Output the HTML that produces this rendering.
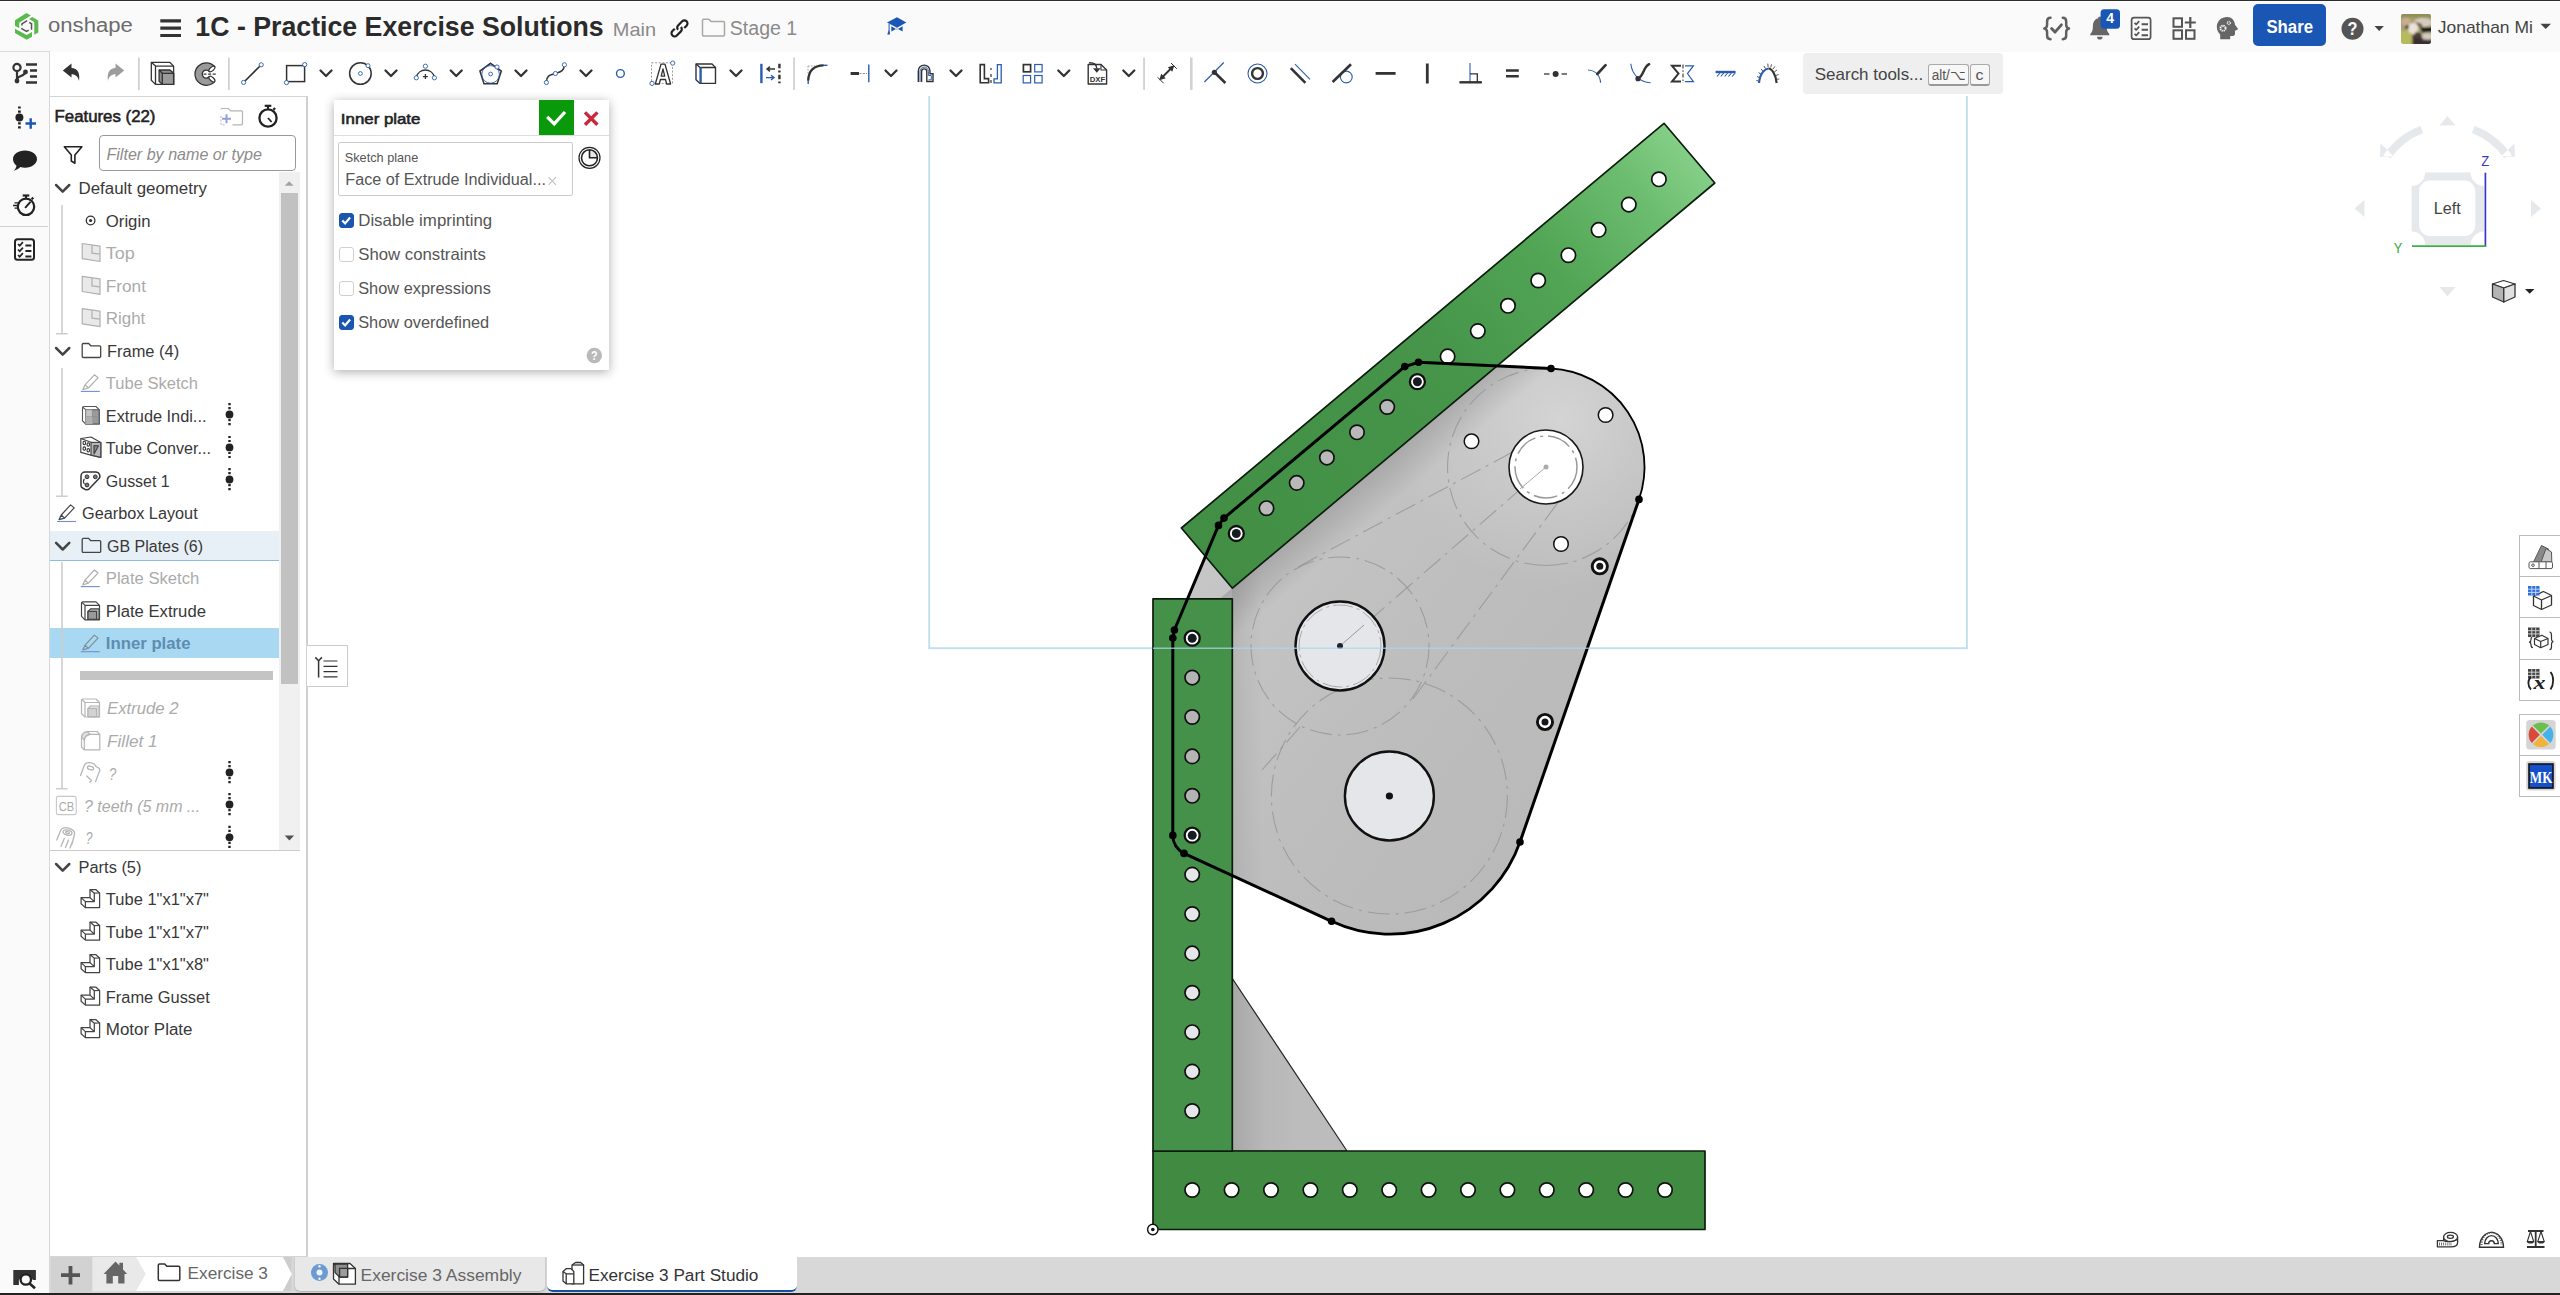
<!DOCTYPE html>
<html lang="en"><head><meta charset="utf-8"><title>1C - Practice Exercise Solutions | Exercise 3 Part Studio</title>
<style>
html,body{margin:0;padding:0;}
body{width:2560px;height:1295px;overflow:hidden;background:#fff;position:relative;font-family:"Liberation Sans",sans-serif;}
.abs{position:absolute;left:0;top:0;}
div{box-sizing:border-box;position:absolute;}
#topline{left:0;top:0;width:2560px;height:2px;background:#fff;border-top:1px solid #2d2d2d;}
#header{left:0;top:1px;width:2560px;height:51px;background:#fafafa;}
#toolbar{left:49px;top:52px;width:2511px;height:45px;background:#fff;}
#tbline{left:49px;top:96px;width:259px;height:1px;background:#d4d4d4;}
#rail{left:0;top:52px;width:49px;height:1241px;background:#fafafa;}
#railtab{left:0;top:51px;width:50px;height:46px;background:#fafafa;border-top:1px solid #dadada;border-right:1px solid #dadada;}
#railsep{left:0;top:226px;width:48px;height:1px;background:#d0d0d0;}
#features{left:49px;top:96px;width:259px;height:1161px;background:#fff;border:1px solid #d6d6d6;border-right:2px solid #d0d0d0;}
#search{left:1803px;top:53px;width:199.5px;height:41px;background:#efefef;border-radius:4px;}
.key{top:64px;height:22px;background:#f7f7f7;border:1px solid #aaa;border-bottom:2px solid #999;border-radius:3px;}
#dialog{left:334px;top:100px;width:275px;height:270px;background:#fff;box-shadow:0 2px 10px rgba(0,0,0,.32);}
#dlghead{left:0;top:0;width:275px;height:36px;border-bottom:1px solid #dcdcdc;}
#okbtn{left:205px;top:0;width:35px;height:35px;background:#0a990b;}
#skbox{left:4px;top:42px;width:235px;height:54px;border:1px solid #ccc;border-radius:2px;}
.cb{left:5px;width:15px;height:15px;border-radius:3px;border:1px solid #cfcfcf;background:#fff;}
.cb.on{background:#1a56b0;border-color:#1a56b0;}
#bottombar{left:49px;top:1257px;width:2511px;height:36px;background:#d8d8d8;}
#botline{left:0;top:1293px;width:2560px;height:2px;background:#222;}
#plusbtn{left:51px;top:1257px;width:41px;height:36px;background:#d2d2d2;}
#tabA{left:295px;top:1257px;width:250px;height:34px;background:#e8e8e8;border-radius:0 0 5px 5px;box-shadow:0 1px 2px rgba(0,0,0,.2);}
#tabB{left:547px;top:1256px;width:250px;height:36px;background:#fff;border-bottom:2px solid #1b4f9c;border-radius:0 0 6px 6px;}
#share{left:2253px;top:4px;width:73px;height:42px;background:#1a56b3;border-radius:5px;}
#selrow{left:50px;top:628px;width:229px;height:30px;background:#a9d8f2;}
#gbrow{left:50px;top:531px;width:229px;height:30px;background:#e8f0f7;border-bottom:1px solid #8bbbe6;}
#sbtrack{left:279px;top:172px;width:21px;height:678px;background:#f0f0f0;}
#sbthumb{left:281px;top:193px;width:17px;height:491px;background:#c1c1c1;}
#rollbar{left:80px;top:671px;width:193px;height:9px;background:#c4c4c4;}
#flistbot{left:50px;top:850px;width:250px;height:1px;background:#ccc;}
#filter{left:99px;top:135px;width:197px;height:36px;border:1px solid #999;border-radius:4px;background:#fff;}
#toggle{left:307px;top:645px;width:41px;height:42px;background:#fff;border:1px solid #ccc;border-left:none;}
#rightbar1{left:2519px;top:535px;width:42px;height:166px;background:#fff;border:1px solid #bbb;}
#rightbar2{left:2519px;top:714px;width:42px;height:83px;background:#fff;border:1px solid #bbb;}
.rsep{left:2519px;width:42px;height:1px;background:#bbb;}

</style></head>
<body>
<div id="header"></div><div id="topline"></div>
<div id="toolbar"></div>
<div id="rail"></div><div id="railtab"></div><div id="railsep"></div>
<div id="features"></div><div id="tbline"></div>
<div id="sbtrack"></div><div id="sbthumb"></div>
<div id="gbrow"></div><div id="selrow"></div><div id="rollbar"></div><div id="flistbot"></div>
<div id="filter"></div>
<div id="search"></div><div class="key" style="left:1928px;width:40.5px"></div><div class="key" style="left:1969.5px;width:20.5px"></div>
<div id="share"></div>
<div id="bottombar"></div><div id="plusbtn"></div><div id="tabA"></div><div id="tabB"></div>
<div id="botline"></div>
<svg id="cv" class="abs" width="2560" height="1295" viewBox="0 0 2560 1295">
<defs>
<linearGradient id="gDiag" gradientUnits="userSpaceOnUse" x1="1207" y1="557.7" x2="1689" y2="152.8">
<stop offset="0" stop-color="#428e45"/><stop offset="0.5" stop-color="#46954b"/><stop offset="0.72" stop-color="#52a555"/><stop offset="0.9" stop-color="#6dbd70"/><stop offset="1" stop-color="#84cf87"/></linearGradient>
<linearGradient id="gPlate" gradientUnits="userSpaceOnUse" x1="1250" y1="500" x2="1650" y2="800">
<stop offset="0" stop-color="#c6c6c6"/><stop offset="0.5" stop-color="#bdbdbd"/><stop offset="1" stop-color="#b8b8b8"/></linearGradient>
<radialGradient id="gPlateHi" gradientUnits="userSpaceOnUse" cx="1560" cy="420" r="170">
<stop offset="0" stop-color="#d4d4d4" stop-opacity="1"/><stop offset="1" stop-color="#d0d0d0" stop-opacity="0"/></radialGradient>
<linearGradient id="gGus" gradientUnits="userSpaceOnUse" x1="1232" y1="1000" x2="1300" y2="1000">
<stop offset="0" stop-color="#a8a8a8"/><stop offset="0.5" stop-color="#b8b8b8"/><stop offset="1" stop-color="#bcbcbc"/></linearGradient>
</defs>
<path d="M929.2 96V648.2H1966.9V96" fill="none" stroke="#c0e1ec" stroke-width="1.9"/>
<path d="M1172.8 835.4 L1172.8 638 L1174.4 630 L1218.5 525.4 L1224 518.1 L1404.8 366.6 L1418.5 362.3 L1551 368.5 A98.5 98.5 0 0 1 1639 499.4 L1520 842 A138 138 0 0 1 1331.6 921.3 L1184 853.4 A20 20 0 0 1 1172.8 835.4 Z" fill="url(#gPlate)"/>
<path d="M1172.8 835.4 L1172.8 638 L1174.4 630 L1218.5 525.4 L1224 518.1 L1404.8 366.6 L1418.5 362.3 L1551 368.5 A98.5 98.5 0 0 1 1639 499.4 L1520 842 A138 138 0 0 1 1331.6 921.3 L1184 853.4 A20 20 0 0 1 1172.8 835.4 Z" fill="url(#gPlateHi)"/>
<clipPath id="cpPlate"><path d="M1172.8 835.4 L1172.8 638 L1174.4 630 L1218.5 525.4 L1224 518.1 L1404.8 366.6 L1418.5 362.3 L1551 368.5 A98.5 98.5 0 0 1 1639 499.4 L1520 842 A138 138 0 0 1 1331.6 921.3 L1184 853.4 A20 20 0 0 1 1172.8 835.4 Z"/></clipPath>
<linearGradient id="gSh" gradientUnits="userSpaceOnUse" x1="1473" y1="385" x2="1498" y2="414.5"><stop offset="0" stop-color="#000" stop-opacity="0.14"/><stop offset="1" stop-color="#000" stop-opacity="0"/></linearGradient>
<path d="M1171 639.6 L1714.8 183 L1760 236 L1216.6 692.4 Z" fill="url(#gSh)" clip-path="url(#cpPlate)"/>
<linearGradient id="gSh2" gradientUnits="userSpaceOnUse" x1="1232" y1="700" x2="1262" y2="700"><stop offset="0" stop-color="#000" stop-opacity="0.07"/><stop offset="1" stop-color="#000" stop-opacity="0"/></linearGradient>
<rect x="1232" y="550" width="32" height="380" fill="url(#gSh2)" clip-path="url(#cpPlate)"/>
<path d="M1232 978 L1347 1151 L1232 1151 Z" fill="url(#gGus)" stroke="#222" stroke-width="1.2" stroke-linejoin="round"/>
<circle cx="1340" cy="646" r="89" stroke="#959595" stroke-width="1.1" fill="none" stroke-dasharray="22 6 3 6" opacity="0.8"/>
<circle cx="1389.4" cy="796" r="118" stroke="#959595" stroke-width="1.1" fill="none" stroke-dasharray="22 6 3 6" opacity="0.8"/>
<path d="M1546 565.5 A98.5 98.5 0 0 1 1546 368.5" stroke="#959595" stroke-width="1.1" fill="none" stroke-dasharray="22 6 3 6" opacity="0.8"/>
<path d="M1546 565.5 A98.5 98.5 0 0 0 1632 515" stroke="#959595" stroke-width="1.1" fill="none" stroke-dasharray="22 6 3 6" opacity="0.8"/>
<path d="M1298 567 L1535 440 M1413 699 L1562 497 M1340 646 L1546 467" stroke="#959595" stroke-width="1.1" fill="none" stroke-dasharray="22 6 3 6" opacity="0.8"/>
<path d="M1262 770 L1300 727" stroke="#959595" stroke-width="1.1" fill="none" stroke-dasharray="22 6 3 6" opacity="0.8"/>
<circle cx="1546" cy="467" r="37" fill="#fff" stroke="#1a1a1a" stroke-width="1.6"/>
<circle cx="1546" cy="467" r="31" fill="none" stroke="#999" stroke-width="1.5" stroke-dasharray="24 5 3 5"/>
<circle cx="1546" cy="467" r="2.5" fill="#aaa"/><path d="M1546 467 L1520 489" stroke="#aaa" stroke-width="1"/>
<circle cx="1340" cy="646" r="44.5" fill="#e4e6e9" stroke="#111" stroke-width="2.4"/>
<circle cx="1340" cy="646" r="41" fill="none" stroke="#aaa" stroke-width="1" stroke-dasharray="20 4 3 4"/>
<path d="M1340 646 L1364 625" stroke="#999" stroke-width="1"/><circle cx="1340" cy="646" r="3" fill="#1a2228"/>
<circle cx="1389.4" cy="796" r="44.5" fill="#e4e6e9" stroke="#111" stroke-width="2.4"/><circle cx="1389.4" cy="796" r="3.6" fill="#111"/>
<circle cx="1605.6" cy="415" r="7.3" fill="#fff" stroke="#111" stroke-width="1.5"/>
<circle cx="1471.5" cy="441.3" r="7.3" fill="#fff" stroke="#111" stroke-width="1.5"/>
<circle cx="1561" cy="544" r="7.3" fill="#fff" stroke="#111" stroke-width="1.5"/>
<rect x="1153" y="1151" width="552" height="78.5" fill="#408b41" stroke="#0e1c0e" stroke-width="1.7" stroke-linejoin="round"/>
<rect x="1153" y="598.8" width="79.3" height="552.4" fill="#45914a" stroke="#0e1c0e" stroke-width="1.7" stroke-linejoin="round"/>
<path d="M1181.4 528 L1664 123.3 L1714.8 183 L1232.4 588.2 Z" fill="url(#gDiag)" stroke="#0e1c0e" stroke-width="1.7" stroke-linejoin="round"/>
<circle cx="1192.2" cy="1190" r="7.2" fill="#fff" stroke="#111" stroke-width="1.7"/>
<circle cx="1231.6" cy="1190" r="7.2" fill="#fff" stroke="#111" stroke-width="1.7"/>
<circle cx="1271.0" cy="1190" r="7.2" fill="#fff" stroke="#111" stroke-width="1.7"/>
<circle cx="1310.4" cy="1190" r="7.2" fill="#fff" stroke="#111" stroke-width="1.7"/>
<circle cx="1349.8" cy="1190" r="7.2" fill="#fff" stroke="#111" stroke-width="1.7"/>
<circle cx="1389.2" cy="1190" r="7.2" fill="#fff" stroke="#111" stroke-width="1.7"/>
<circle cx="1428.6" cy="1190" r="7.2" fill="#fff" stroke="#111" stroke-width="1.7"/>
<circle cx="1468.0" cy="1190" r="7.2" fill="#fff" stroke="#111" stroke-width="1.7"/>
<circle cx="1507.4" cy="1190" r="7.2" fill="#fff" stroke="#111" stroke-width="1.7"/>
<circle cx="1546.8" cy="1190" r="7.2" fill="#fff" stroke="#111" stroke-width="1.7"/>
<circle cx="1586.2" cy="1190" r="7.2" fill="#fff" stroke="#111" stroke-width="1.7"/>
<circle cx="1625.6" cy="1190" r="7.2" fill="#fff" stroke="#111" stroke-width="1.7"/>
<circle cx="1665.0" cy="1190" r="7.2" fill="#fff" stroke="#111" stroke-width="1.7"/>
<circle cx="1192.2" cy="638.2" r="7.5" fill="#fff" stroke="#111" stroke-width="2.3"/><circle cx="1192.2" cy="638.2" r="4.5" fill="#151b20"/>
<circle cx="1192.2" cy="677.6" r="7.2" fill="#b4b4b4" stroke="#111" stroke-width="1.7"/>
<circle cx="1192.2" cy="717.0" r="7.2" fill="#b4b4b4" stroke="#111" stroke-width="1.7"/>
<circle cx="1192.2" cy="756.4" r="7.2" fill="#b4b4b4" stroke="#111" stroke-width="1.7"/>
<circle cx="1192.2" cy="795.8" r="7.2" fill="#b4b4b4" stroke="#111" stroke-width="1.7"/>
<circle cx="1192.2" cy="835.2" r="7.5" fill="#fff" stroke="#111" stroke-width="2.3"/><circle cx="1192.2" cy="835.2" r="4.5" fill="#151b20"/>
<circle cx="1192.2" cy="874.6" r="7.2" fill="#e4e6ea" stroke="#111" stroke-width="1.7"/>
<circle cx="1192.2" cy="914.0" r="7.2" fill="#e4e6ea" stroke="#111" stroke-width="1.7"/>
<circle cx="1192.2" cy="953.4" r="7.2" fill="#e4e6ea" stroke="#111" stroke-width="1.7"/>
<circle cx="1192.2" cy="992.8" r="7.2" fill="#e4e6ea" stroke="#111" stroke-width="1.7"/>
<circle cx="1192.2" cy="1032.2" r="7.2" fill="#e4e6ea" stroke="#111" stroke-width="1.7"/>
<circle cx="1192.2" cy="1071.6" r="7.2" fill="#e4e6ea" stroke="#111" stroke-width="1.7"/>
<circle cx="1192.2" cy="1111.0" r="7.2" fill="#e4e6ea" stroke="#111" stroke-width="1.7"/>
<circle cx="1236.3" cy="533.5" r="7.5" fill="#fff" stroke="#111" stroke-width="2.3"/><circle cx="1236.3" cy="533.5" r="4.5" fill="#151b20"/>
<circle cx="1266.5" cy="508.2" r="7.2" fill="#b9b9b9" stroke="#111" stroke-width="1.7"/>
<circle cx="1296.7" cy="482.9" r="7.2" fill="#b9b9b9" stroke="#111" stroke-width="1.7"/>
<circle cx="1326.9" cy="457.6" r="7.2" fill="#b9b9b9" stroke="#111" stroke-width="1.7"/>
<circle cx="1357.0" cy="432.3" r="7.2" fill="#b9b9b9" stroke="#111" stroke-width="1.7"/>
<circle cx="1387.2" cy="407.0" r="7.2" fill="#b9b9b9" stroke="#111" stroke-width="1.7"/>
<circle cx="1417.4" cy="381.7" r="7.5" fill="#fff" stroke="#111" stroke-width="2.3"/><circle cx="1417.4" cy="381.7" r="4.5" fill="#151b20"/>
<circle cx="1447.6" cy="356.4" r="7.2" fill="#fff" stroke="#111" stroke-width="1.7"/>
<circle cx="1477.8" cy="331.1" r="7.2" fill="#fff" stroke="#111" stroke-width="1.7"/>
<circle cx="1508.0" cy="305.8" r="7.2" fill="#fff" stroke="#111" stroke-width="1.7"/>
<circle cx="1538.2" cy="280.5" r="7.2" fill="#fff" stroke="#111" stroke-width="1.7"/>
<circle cx="1568.4" cy="255.2" r="7.2" fill="#fff" stroke="#111" stroke-width="1.7"/>
<circle cx="1598.6" cy="229.9" r="7.2" fill="#fff" stroke="#111" stroke-width="1.7"/>
<circle cx="1628.8" cy="204.6" r="7.2" fill="#fff" stroke="#111" stroke-width="1.7"/>
<circle cx="1658.9" cy="179.3" r="7.2" fill="#fff" stroke="#111" stroke-width="1.7"/>
<circle cx="1599.8" cy="566.3" r="7.6" fill="#fff" stroke="#111" stroke-width="2.9"/><circle cx="1599.8" cy="566.3" r="3.5" fill="#15181c"/>
<circle cx="1545.0" cy="722.0" r="7.6" fill="#fff" stroke="#111" stroke-width="2.9"/><circle cx="1545.0" cy="722.0" r="3.5" fill="#15181c"/>
<path d="M1331.6 921.3 L1184 853.4 A20 20 0 0 1 1172.8 835.4 L1172.8 638 L1174.4 630 L1218.5 525.4 L1224 518.1 L1404.8 366.6 L1418.5 362.3 L1551 368.5" fill="none" stroke="#000" stroke-width="3" stroke-linejoin="round"/>
<path d="M1551 368.5 A98.5 98.5 0 0 1 1639 499.4" fill="none" stroke="#000" stroke-width="1.8"/>
<path d="M1639 499.4 L1520 842" fill="none" stroke="#000" stroke-width="3"/>
<path d="M1520 842 A138 138 0 0 1 1331.6 921.3" fill="none" stroke="#000" stroke-width="2.8"/>
<circle cx="1172.8" cy="638" r="3.8" fill="#000"/>
<circle cx="1174.4" cy="630" r="3.8" fill="#000"/>
<circle cx="1218.5" cy="525.4" r="3.8" fill="#000"/>
<circle cx="1224" cy="518.1" r="3.8" fill="#000"/>
<circle cx="1404.8" cy="366.6" r="3.8" fill="#000"/>
<circle cx="1418.5" cy="362.3" r="3.8" fill="#000"/>
<circle cx="1551" cy="368.5" r="3.8" fill="#000"/>
<circle cx="1639" cy="499.4" r="3.8" fill="#000"/>
<circle cx="1520" cy="842" r="3.8" fill="#000"/>
<circle cx="1331.6" cy="921.3" r="3.8" fill="#000"/>
<circle cx="1184" cy="853.4" r="3.8" fill="#000"/>
<circle cx="1172.8" cy="835.4" r="3.8" fill="#000"/>
<path d="M1153 648.2H1589" stroke="#a9d6ee" stroke-width="1.6" opacity="0.75"/>
<circle cx="1152.8" cy="1229.5" r="5.2" fill="#fff" stroke="#111" stroke-width="1.4"/><circle cx="1152.8" cy="1229.5" r="1.8" fill="#111"/>
</svg>
<div id="toggle"></div>
<div id="rightbar1"></div><div id="rightbar2"></div>
<div class="rsep" style="top:576px"></div><div class="rsep" style="top:617px"></div><div class="rsep" style="top:659px"></div><div class="rsep" style="top:755px"></div>
<div id="dialog"><div id="dlghead"></div><div id="okbtn"></div><div id="skbox"></div><div class="cb on" style="top:113px"></div><div class="cb" style="top:147px"></div><div class="cb" style="top:181px"></div><div class="cb on" style="top:215px"></div></div>
<svg id="ov" class="abs" width="2560" height="1295" viewBox="0 0 2560 1295" font-family='"Liberation Sans", sans-serif'>
<g stroke="#333" fill="none" stroke-width="2.2"><circle cx="17" cy="67.5" r="3.6" fill="#fafafa"/><path d="M17 71v9.5M17 80c0-5 7-3 8-7.5"/><path d="M26 64.5h11M30 70.5h7M30 76.5h7M26 82.5h11" stroke-width="2.3"/></g><circle cx="17" cy="81" r="2.4" fill="#333"/><circle cx="25.5" cy="72" r="2.4" fill="#333"/>
<path d="M62.8 70.5 L71.5 63.6 V68 C77.5 68 80.2 73 79 81 C78 76.5 75.5 74.3 71.5 74.3 V77.6 Z" fill="#333"/>
<path d="M124.2 70.5 L115.5 63.6 V68 C109.5 68 106.8 73 108 81 C109 76.5 111.5 74.3 115.5 74.3 V77.6 Z" fill="#9c9c9c"/>
<rect x="138.0" y="57.5" width="1.7" height="32.5" fill="#cfcfcf"/>
<rect x="228.0" y="57.5" width="1.7" height="32.5" fill="#cfcfcf"/>
<rect x="793.2" y="57.5" width="1.7" height="32.5" fill="#cfcfcf"/>
<rect x="1143.2" y="57.5" width="1.7" height="32.5" fill="#cfcfcf"/>
<rect x="1190" y="57.5" width="2.6" height="32.5" fill="#d2d2d2"/>
<g stroke="#333" stroke-width="1.3" stroke-linejoin="round"><path d="M151.3 62.3 H169.7 L173.6 66.1 V84.4 H155.5 L151.3 80.3 Z" fill="#fff"/><path d="M151.3 62.3 L155.5 66.1 H173.6 M155.5 66.1 V84.4" fill="none"/><path d="M159.1 70 H170 L173.6 73.3 V84.4 H162.3 L159.1 81.2 Z" fill="#8d8d8d"/><path d="M162.3 73.3 H173.6 V84.4 H162.3 Z" fill="#9b9b9b"/><path d="M159.1 70 L162.3 73.3" fill="none"/></g>
<path d="M214.6 66.5 A11.25 11.25 0 1 0 214.6 81.6 L209.2 76.7 A4 4 0 1 1 209.2 71.4 Z" fill="#9a9a9a" stroke="#333" stroke-width="1.3" stroke-linejoin="round"/><ellipse cx="211.9" cy="69" rx="3.7" ry="1.8" transform="rotate(-42 211.9 69)" fill="#fff" stroke="#333" stroke-width="1.2"/><ellipse cx="211.9" cy="79.1" rx="3.7" ry="1.8" transform="rotate(42 211.9 79.1)" fill="#fff" stroke="#333" stroke-width="1.2"/><path d="M203.5 74.1H217" stroke="#333" stroke-width="1.4" stroke-dasharray="3 1.6"/>
<path d="M244.5 81.5L260.3 65.7" stroke="#333" stroke-width="1.6"/><circle cx="243.6" cy="82.4" r="2.1" fill="#fff" stroke="#2a5db0" stroke-width="0.9"/><circle cx="261.2" cy="64.8" r="2.1" fill="#fff" stroke="#2a5db0" stroke-width="0.9"/>
<rect x="286.6" y="65.6" width="18" height="16" fill="none" stroke="#333" stroke-width="1.5"/><circle cx="304.7" cy="64.6" r="2.1" fill="#fff" stroke="#2a5db0" stroke-width="0.9"/><circle cx="286.5" cy="82.6" r="2.1" fill="#fff" stroke="#2a5db0" stroke-width="0.9"/><path d="M320.5 70.55 L326 76.05 L331.5 70.55" fill="none" stroke="#333" stroke-width="2.3" stroke-linecap="round" stroke-linejoin="round"/>
<circle cx="360.4" cy="73.5" r="10.8" fill="none" stroke="#333" stroke-width="1.5"/><circle cx="360.4" cy="73.5" r="1.9" fill="#fff" stroke="#2a5db0" stroke-width="0.9"/><circle cx="368" cy="65.7" r="2" fill="#fff" stroke="#2a5db0" stroke-width="0.9"/><path d="M385.5 70.55 L391 76.05 L396.5 70.55" fill="none" stroke="#333" stroke-width="2.3" stroke-linecap="round" stroke-linejoin="round"/>
<path d="M416.4 77 A9.3 9.3 0 0 1 434.4 77" fill="none" stroke="#333" stroke-width="1.5"/><circle cx="416.3" cy="77.8" r="2.1" fill="#fff" stroke="#2a5db0" stroke-width="0.9"/><circle cx="434.4" cy="77.8" r="2.1" fill="#fff" stroke="#2a5db0" stroke-width="0.9"/><circle cx="425.4" cy="66.2" r="2.1" fill="#fff" stroke="#2a5db0" stroke-width="0.9"/><path d="M422.9 76.6h5M425.4 74.1v5" stroke="#333" stroke-width="1.3"/><path d="M450.7 70.55 L456.2 76.05 L461.7 70.55" fill="none" stroke="#333" stroke-width="2.3" stroke-linecap="round" stroke-linejoin="round"/>
<polygon points="490.6,63.3 501.3,71.1 497.2,83.7 484.0,83.7 479.9,71.1" fill="none" stroke="#333" stroke-width="1.5"/><circle cx="490.6" cy="74.4" r="8.8" fill="none" stroke="#2a5db0" stroke-width="0.9"/><circle cx="490.6" cy="74" r="1.9" fill="#fff" stroke="#2a5db0" stroke-width="0.9"/><circle cx="497" cy="67" r="2.1" fill="#fff" stroke="#2a5db0" stroke-width="0.9"/><path d="M515.5 70.55 L521 76.05 L526.5 70.55" fill="none" stroke="#333" stroke-width="2.3" stroke-linecap="round" stroke-linejoin="round"/>
<path d="M546.5 82 C546.5 74 552 75 555.4 73.5 C559 72 564 72 564.3 65.2" fill="none" stroke="#333" stroke-width="1.5"/><circle cx="546.4" cy="82.5" r="2.1" fill="#fff" stroke="#2a5db0" stroke-width="0.9"/><circle cx="555.4" cy="73.5" r="2.1" fill="#fff" stroke="#2a5db0" stroke-width="0.9"/><circle cx="564.4" cy="64.8" r="2.1" fill="#fff" stroke="#2a5db0" stroke-width="0.9"/><path d="M580.5 70.55 L586 76.05 L591.5 70.55" fill="none" stroke="#333" stroke-width="2.3" stroke-linecap="round" stroke-linejoin="round"/>
<circle cx="620.4" cy="73.5" r="3.9" fill="none" stroke="#2a5db0" stroke-width="1.4"/>
<rect x="651.5" y="62.8" width="21" height="20.6" fill="none" stroke="#999" stroke-width="1" stroke-dasharray="2 1.6"/><path d="M655.3 84 L661 64.2 H665 L670.6 84 H666.6 L665.5 79.5 H660.4 L659.3 84 Z M661.2 76.2 H664.7 L663 69 Z" fill="#fff" stroke="#333" stroke-width="1.3" stroke-linejoin="round"/><circle cx="672.7" cy="63.1" r="2.1" fill="#fff" stroke="#2a5db0" stroke-width="0.9"/><circle cx="652" cy="83.4" r="2.1" fill="#fff" stroke="#2a5db0" stroke-width="0.9"/>
<g fill="none" stroke="#333" stroke-width="1.4" stroke-linejoin="round"><path d="M696 64 H712 L715.5 67.5 V83.4 H700 L696 79.8 Z"/><path d="M696 64 L700 67.5 H715.5"/></g><path d="M700.6 67.5V83.4" stroke="#2a5db0" stroke-width="2.4"/><path d="M730.5 70.55 L736 76.05 L741.5 70.55" fill="none" stroke="#333" stroke-width="2.3" stroke-linecap="round" stroke-linejoin="round"/>
<path d="M761.4 63.8V83.2" stroke="#2a5db0" stroke-width="2.4"/><path d="M779.4 63.8V83.2" stroke="#333" stroke-width="2.4" stroke-dasharray="4.5 2.2 2 2.2"/><path d="M775 69H767.5M770 66.6L767 69L770 71.4" fill="none" stroke="#333" stroke-width="1.4"/><path d="M766 77.6H773.5M771 75.2L774 77.6L771 80" fill="none" stroke="#2a5db0" stroke-width="1.4"/>
<path d="M808 66H816" stroke="#999" stroke-width="0.9" stroke-dasharray="1.6 1.3"/><path d="M808 66V74" stroke="#999" stroke-width="0.9" stroke-dasharray="1.6 1.3"/><path d="M808.2 84 V80" stroke="#2a5db0" stroke-width="1.4"/><path d="M823 65.3 H827.5" stroke="#2a5db0" stroke-width="1.4"/><path d="M808.2 80.5 C808.6 71 814 65.6 823.5 65.4" fill="none" stroke="#333" stroke-width="2.3"/>
<path d="M850.6 73.5H859" stroke="#333" stroke-width="3"/><path d="M859.5 73.5H867" stroke="#888" stroke-width="1" stroke-dasharray="2 1.3"/><path d="M868.8 64.6V82.2" stroke="#2a5db0" stroke-width="1.4"/><path d="M885.5 70.55 L891 76.05 L896.5 70.55" fill="none" stroke="#333" stroke-width="2.3" stroke-linecap="round" stroke-linejoin="round"/>
<path d="M918.3 82 V71 A5.8 5.8 0 0 1 930 71 V73.8 H933 V81.5 H926.8 V71.5 A2.5 2.5 0 0 0 921.6 71.5 V82" fill="none" stroke="#333" stroke-width="1.4"/><path d="M920 82 V71.3 A4.2 4.2 0 0 1 928.4 71.3 V75.5 H931.3 V79.8 H928.5" fill="none" stroke="#2a5db0" stroke-width="1"/><path d="M950.5 70.55 L956 76.05 L961.5 70.55" fill="none" stroke="#333" stroke-width="2.3" stroke-linecap="round" stroke-linejoin="round"/>
<path d="M980.2 64.6 H984.4 V78.6 H988.6 V82.8 H980.2 Z" fill="none" stroke="#333" stroke-width="1.6"/><path d="M991 68v2M991 74v3M991 80v3" stroke="#333" stroke-width="1.2"/><path d="M1001.2 64.6 H997.4 V78.8 H994 V82.8 H1001.2 Z" fill="none" stroke="#2a5db0" stroke-width="1.3"/>
<rect x="1023.4" y="64.6" width="7.2" height="7.2" fill="none" stroke="#333" stroke-width="1.7"/><rect x="1034.7" y="64.5" width="7.4" height="7.4" fill="none" stroke="#2a5db0" stroke-width="1.2"/><rect x="1023.2" y="75.5" width="7.4" height="7.4" fill="none" stroke="#2a5db0" stroke-width="1.2"/><rect x="1034.7" y="75.5" width="7.4" height="7.4" fill="none" stroke="#2a5db0" stroke-width="1.2"/><path d="M1058.3 70.55 L1063.8 76.05 L1069.3 70.55" fill="none" stroke="#333" stroke-width="2.3" stroke-linecap="round" stroke-linejoin="round"/>
<path d="M1088.2 64.5 H1101 L1106.6 70 V84 H1088.2 Z" fill="#fff" stroke="#333" stroke-width="1.4" stroke-linejoin="round"/><path d="M1101 64.5V70H1106.6" fill="none" stroke="#333" stroke-width="1.1"/><path d="M1089 62.8 C1094 62.5 1096.5 64.5 1096.8 68.5" fill="none" stroke="#333" stroke-width="1.3"/><path d="M1093 68.2 H1100.6 L1096.8 72.8 Z" fill="#333"/><text x="1089.7" y="82.2" font-size="7.6" font-weight="bold" fill="#333" textLength="15.5" lengthAdjust="spacingAndGlyphs">DXF</text><path d="M1123.3 70.55 L1128.8 76.05 L1134.3 70.55" fill="none" stroke="#333" stroke-width="2.3" stroke-linecap="round" stroke-linejoin="round"/>
<path d="M1161 78.5 L1172.5 67" stroke="#333" stroke-width="2"/><path d="M1159.2 80.3 L1161.2 73.8 L1165.7 78.3 Z M1174.3 65.2 L1172.3 71.7 L1167.8 67.2 Z" fill="#333"/><path d="M1157.8 77.4 L1163.6 83.2 M1171 63 L1176.8 68.8" stroke="#333" stroke-width="1"/>
<path d="M1204.4 82L1223.8 62.5" stroke="#2a5db0" stroke-width="1.2"/><path d="M1214.4 72.3L1225.4 83" stroke="#333" stroke-width="2.6"/><circle cx="1214.4" cy="72.3" r="2.6" fill="#333"/>
<circle cx="1257.5" cy="73.5" r="9.5" fill="none" stroke="#2a5db0" stroke-width="1.1"/><circle cx="1257.5" cy="73.5" r="5.4" fill="none" stroke="#333" stroke-width="2.4"/>
<path d="M1290.8 68.2L1305.4 82.8" stroke="#333" stroke-width="2.6"/><path d="M1295 64.2L1310 79.3" stroke="#2a5db0" stroke-width="1.1"/>
<circle cx="1346.3" cy="77" r="5.9" fill="none" stroke="#2a5db0" stroke-width="1.1"/><path d="M1332.6 82L1351 64.2" stroke="#333" stroke-width="2.6"/>
<path d="M1375.6 73.4H1395.6" stroke="#333" stroke-width="2.8"/><path d="M1427.3 63.5V83.5" stroke="#333" stroke-width="2.8"/>
<path d="M1470 63V82" stroke="#2a5db0" stroke-width="1.1"/><path d="M1470 73.8H1477.3V82" fill="none" stroke="#333" stroke-width="1.3"/><path d="M1459.4 82.3H1481.9" stroke="#333" stroke-width="2.4"/>
<path d="M1506 70.6H1518.8M1506 76.3H1518.8" stroke="#333" stroke-width="2.5"/>
<path d="M1544 74H1549.5M1561.5 74H1567" stroke="#456" stroke-width="1.3"/><circle cx="1555.6" cy="74" r="3" fill="#333"/>
<path d="M1588 70 C1595 70.5 1600 75 1600.6 82.8" fill="none" stroke="#2a5db0" stroke-width="1.2"/><path d="M1597.3 74L1605.6 65.2" stroke="#333" stroke-width="2.6" stroke-linecap="round"/>
<path d="M1630.8 63.8 C1632 74 1639 82 1650.6 82.8" fill="none" stroke="#2a5db0" stroke-width="1.1"/><path d="M1638 78.6 C1644 76 1643 67 1649.2 64.2" fill="none" stroke="#333" stroke-width="2.4" stroke-linecap="round"/><circle cx="1638" cy="78.7" r="2.6" fill="#333"/>
<path d="M1681 65.8 H1672 L1678.5 73.6 L1672 81.6 H1681" fill="none" stroke="#333" stroke-width="2"/><path d="M1685 65.8 H1693.4 L1687.5 73.6 L1693.4 81.6 H1685" fill="none" stroke="#2a5db0" stroke-width="1.2"/><path d="M1683 64.5V83" stroke="#333" stroke-width="1.1" stroke-dasharray="4 1.8 1.5 1.8"/>
<path d="M1715.6 72H1735.6" stroke="#2a5db0" stroke-width="2.4"/><path d="M1717 76.5l3-3.5M1720.8 76.5l3-3.5M1724.6 76.5l3-3.5M1728.4 76.5l3-3.5M1732.2 76.5l3-3.5" stroke="#2a5db0" stroke-width="1.1"/>
<path d="M1759 83 C1760 72 1766 68.5 1768.5 68.5" fill="none" stroke="#2a5db0" stroke-width="2.2"/><path d="M1768.5 68.5 C1772 68.5 1776 75 1776.6 83" fill="none" stroke="#333" stroke-width="2.2"/><path d="M1756.3 80.5l2.2.5M1757 76.5l2.4 1M1758.6 72.6l2.4 1.6M1761 69l2 2.2M1764 66l1.4 2.6M1767.8 63.6l.3 3.4M1771.5 64.4l-.8 3M1774.8 66.5l-2 2.6M1777 70l-2.6 1.8M1778.6 74.5l-2.8 1M1779.3 79l-2.8.3" stroke="#555" stroke-width="1"/>
<g fill="#5aba4e"><path d="M14.97 20.27 L26.48 12.97 L30.86 15.57 L19.19 22.86 V28.21 L14.97 25.78 Z"/><path d="M32.16 17.02 L38.32 20.59 V32.43 L34.26 34.86 V21.89 L29.08 18.97 Z"/><path d="M14.97 28.7 L26.64 35.02 L32 31.94 V36.64 L26.64 39.72 L14.97 32.91 Z"/></g><g fill="none" stroke="#555" stroke-width="1.5"><path d="M21.94 25.6 V23.83 L27.13 20.59"/><path d="M29.24 22.54 L31.51 23.67 V29.67"/><path d="M21.29 28.37 L26.48 31.45 L28.75 30.16"/></g>
<path d="M160.3 20.8H181M160.3 28.2H181M160.3 35.5H181" stroke="#333" stroke-width="3.2"/>
<g transform="translate(679.5 28.4) rotate(-45)" fill="none" stroke="#222" stroke-width="2.2" stroke-linecap="butt"><path d="M-3.6 -3.1 H-6.9 A3.1 3.1 0 0 0 -6.9 3.1 H-1.1 A3.1 3.1 0 0 0 2 0"/><path d="M3.600 3.100 H6.900 A3.100 3.100 0 0 0 6.900 -3.100 H1.100 A3.100 3.100 0 0 0 -2 0"/></g>
<path d="M702.5 20.4 a1.2 1.2 0 0 1 1.2 -1.2 H709.0 L711.0 21.5 H723.3 a1.2 1.2 0 0 1 1.2 1.2 V34.8 a1.2 1.2 0 0 1 -1.2 1.2 H703.7 a1.2 1.2 0 0 1 -1.2 -1.2 Z" fill="none" stroke="#a8a8a8" stroke-width="1.5" stroke-linejoin="round"/>
<path d="M887 22.5 L897 17.2 L906.4 22.5 L897 27.8 Z" fill="#1a56b3"/><path d="M891.3 26.2 V31.5 L897 28.6 L902.6 31.5 V26.2 L897 29.6 Z" fill="#1a56b3"/><path d="M888.6 23.4 V30 L887.3 34.4 H890 L889.6 30 V24" fill="#1a56b3"/>
<g fill="none" stroke="#606060" stroke-width="2.5" stroke-linecap="round" stroke-linejoin="round"><path d="M2050.5 17.8 c-3 0 -3.4 1.4 -3.4 3.6 v3.4 c0 2 -1 3.3 -2.8 3.7 c1.8 .4 2.8 1.7 2.8 3.7 v3.4 c0 2.200 .4 3.600 3.400 3.600"/><path d="M2062.800 17.800 c3 0 3.400 1.400 3.400 3.600 v3.400 c0 2 1 3.300 2.800 3.700 c-1.800 .400 -2.800 1.700 -2.800 3.700 v3.400 c0 2.200 -.400 3.600 -3.400 3.600"/><path d="M2051.600 28.500 l3.400 3.600 l6.400 -7.200" stroke-width="2.9"/></g>
<path transform="translate(-1.3 0.3)" d="M2099.4 18 a1.700 1.700 0 0 1 3.400 0 c3.600 1 5.200 4 5.200 8 c0 4 .8 5.800 2.600 7.600 v1.400 h-19 v-1.400 c1.800 -1.800 2.600 -3.600 2.600 -7.600 c0 -4 1.600 -7 5.200 -8 Z M2098.300 36.500 h5.600 a2.800 2.800 0 0 1 -5.600 0 Z" fill="#666"/>
<rect x="2100.6" y="9.2" width="19.400" height="19.600" rx="3.500" fill="#1a56b3"/>
<g fill="none" stroke="#555" stroke-width="1.7" stroke-linejoin="round"><rect x="2131.600" y="17.600" width="19" height="21.600" rx="2.500"/><path d="M2134.600 22.800 l1.600 1.700 l3 -3.400 M2134.600 28.300 l1.600 1.700 l3 -3.400 M2134.600 33.800 l1.600 1.700 l3 -3.400"/><path d="M2141.600 24.300 h6.400 M2141.600 29.800 h6.400 M2141.600 35.300 h6.400" stroke-width="2"/></g>
<g fill="none" stroke="#555" stroke-width="2"><rect x="2173.500" y="18.300" width="8.500" height="8.500"/><rect x="2173.500" y="30.300" width="8.500" height="8.500"/><rect x="2186" y="30.300" width="8.500" height="8.500"/><path d="M2190.300 17 v11 M2184.800 22.500 h11" stroke-width="2.200"/></g>
<path transform="translate(4453.800 0) scale(-1 1)" d="M2226.500 17 c6 0 10.500 4.200 10.500 9.800 c0 3.600 -1.600 5.800 -3.400 7.600 v4.900 h-10 v-3.400 h-2.600 c-1.400 0 -2.200 -.8 -2.200 -2.200 v-3 l-2.400 -1 c-.6 -.3 -.6 -.9 -.2 -1.400 l2.600 -3.600 c.4 -4.400 3.400 -7.700 7.700 -7.700 Z" fill="#666"/><circle cx="2223" cy="28.300" r="2.600" fill="none" stroke="#fafafa" stroke-width="1.900" stroke-dasharray="1.300 .75"/><circle cx="2228.800" cy="23" r="1.500" fill="none" stroke="#fafafa" stroke-width="1.300" stroke-dasharray=".9 .65"/>
<circle cx="2352.500" cy="28.700" r="11" fill="#555"/><text x="2347.6" y="35" font-size="17.5" fill="#fafafa" textLength="10" lengthAdjust="spacingAndGlyphs" font-weight="bold" >?</text>
<path d="M2374.500 26 h9.400 l-4.700 5 Z" fill="#444"/><path d="M2540.400 23.800 h10.600 l-5.300 5.200 Z" fill="#444"/>
<defs><clipPath id="av"><rect x="2401" y="13.900" width="30" height="30" rx="1.800"/></clipPath><filter id="avb" x="-10%" y="-10%" width="120%" height="120%"><feGaussianBlur stdDeviation="0.9"/></filter></defs><g clip-path="url(#av)"><g filter="url(#avb)" transform="translate(2401 13.900)"><rect x="-3" y="-3" width="36" height="36" fill="#a9a170"/><rect x="-3" y="-3" width="36" height="6.500" fill="#8e8e56"/><rect x="-3" y="17" width="13.500" height="16" fill="#b6ba5d"/><ellipse cx="5" cy="8" rx="4.500" ry="4.500" fill="#c9ad90"/><ellipse cx="22" cy="8.500" rx="9" ry="4.500" fill="#d6ccbb"/><ellipse cx="12" cy="14.500" rx="5" ry="5.500" fill="#ece2d9"/><path d="M14 8 l6 1.500 l2 4 l-4 -1 z" fill="#5a4a38"/><ellipse cx="6" cy="13" rx="1.800" ry="2" fill="#2e2a18"/><path d="M19 13.500 L33 13 V17.800 L21 18.500 Z" fill="#191616"/><ellipse cx="26" cy="22.500" rx="6" ry="3.500" fill="#d3cac1"/><path d="M11.500 21 L20 19.500 L22 25.500 L33 26 V33 H11.500 Z" fill="#3a2f2d"/><path d="M14 18 l6 1 l1 5 l-7 0z" fill="#4a3d38"/></g></g>
<path d="M19.400 106.400 v2.200 m0 1.900 v2.200 M19.400 122.200 v2.200 m0 1.900 v2.200" stroke="#222" stroke-width="2.700"/><circle cx="19.400" cy="117.500" r="4" fill="#222"/><path d="M25.500 123.500 h10.500 M30.700 118.300 v10.500" stroke="#1a56b3" stroke-width="2.400"/>
<path d="M25 150.500 c7 0 12 3.800 12 8.600 c0 4.800 -5 8.600 -12 8.600 c-1.600 0 -3.200 -.2 -4.600 -.6 c-1.800 1.700 -4 2.900 -6.600 3.600 c1.600 -1.500 2.500 -3.200 2.700 -5 c-2.200 -1.600 -3.500 -3.900 -3.500 -6.600 c0 -4.800 5 -8.600 12 -8.600 Z" fill="#222"/>
<circle cx="26" cy="206.800" r="8.200" fill="none" stroke="#222" stroke-width="2.200"/><path d="M22.700 195.500 H29.300" stroke="#222" stroke-width="2.200"/><path d="M26 195.700 V198.600" stroke="#222" stroke-width="2"/><path d="M31.600 199.300 l1.700 -1.700" stroke="#222" stroke-width="2.200"/><path d="M25.600 207.300 L30 202.400" stroke="#222" stroke-width="2" stroke-linecap="round"/><path d="M14.500 202.800 H20 M13 205.500 H18.500 M14.600 208.200 H18.200" stroke="#222" stroke-width="1.300"/>
<g fill="none" stroke="#222" stroke-width="2" stroke-linejoin="round"><rect x="15" y="239.200" width="19" height="20.600" rx="2.500"/></g><g fill="none" stroke="#222" stroke-width="1.700"><path d="M18 244 l1.700 1.700 l3.200 -3.600 M18 249.500 l1.700 1.700 l3.200 -3.600 M18 255 l1.700 1.700 l3.200 -3.600"/><path d="M25.400 245.400 h6 M25.400 250.900 h6 M25.400 256.400 h6" stroke-width="2"/></g>
<path d="M13.300 1270 h22.600 v10 h-3 a8 8 0 0 0 -14 0 l0 5 h-5.600 Z" fill="#333"/><circle cx="25.800" cy="1279.500" r="5.200" fill="#fafafa" stroke="#222" stroke-width="2.300"/><path d="M29.600 1283.500 l5.400 4.800" stroke="#222" stroke-width="2.600"/>
<path d="M221 109.500 a1 1 0 0 1 1 -1 h6.500 l2 2.300 h11 a1 1 0 0 1 1 1 v12 a1 1 0 0 1 -1 1 h-9" fill="none" stroke="#b4b4b4" stroke-width="1.200"/><path d="M221 116 v8.800 h4" fill="none" stroke="#b4b4b4" stroke-width="1" stroke-dasharray="2 1.500"/><path d="M222 118.800 h9 M226.500 114.300 v9" stroke="#8ea1dc" stroke-width="2"/>
<circle cx="268" cy="118" r="8.6" fill="none" stroke="#222" stroke-width="2.3"/><path d="M264.7 105.80000000000001H271.3" stroke="#222" stroke-width="2.2"/><path d="M268 106.0V109.4" stroke="#222" stroke-width="2"/><path d="M273.332 109.83l1.8 -1.8" stroke="#222" stroke-width="2.2"/><path d="M268 118L271.6 122" stroke="#222" stroke-width="1.8"/>
<path d="M64.300 146.800 h17.600 l-7 8.200 v8.200 l-3.600 -2.200 v-6 Z" fill="none" stroke="#222" stroke-width="1.600" stroke-linejoin="round"/>
<path d="M284.700 185.800 h9 l-4.500 -4.600 Z" fill="#a3a3a3"/><path d="M284.700 835.600 h9.400 l-4.700 5 Z" fill="#505050"/>
<path d="M62 205 V333.7 M56 333.7 H67.600" fill="none" stroke="#cdcdcd" stroke-width="1.600"/>
<path d="M62 368 V496.3 M56 496.3 H67.600" fill="none" stroke="#cdcdcd" stroke-width="1.600"/>
<path d="M62 562 V788.7 M56 788.7 H67.600" fill="none" stroke="#cdcdcd" stroke-width="1.600"/>
<path d="M56.1 185.0 L62.7 191.6 L69.3 185.0" fill="none" stroke="#444" stroke-width="2.5" stroke-linecap="round" stroke-linejoin="round"/>
<path d="M56.1 348.0 L62.7 354.59999999999997 L69.3 348.0" fill="none" stroke="#444" stroke-width="2.5" stroke-linecap="round" stroke-linejoin="round"/>
<path d="M56.1 542.9 L62.7 549.5 L69.3 542.9" fill="none" stroke="#444" stroke-width="2.5" stroke-linecap="round" stroke-linejoin="round"/>
<path d="M56.1 864.0 L62.7 870.6 L69.3 864.0" fill="none" stroke="#444" stroke-width="2.5" stroke-linecap="round" stroke-linejoin="round"/>
<circle cx="90.600" cy="220.500" r="4.300" fill="none" stroke="#333" stroke-width="1.300"/><circle cx="90.600" cy="220.500" r="1.600" fill="#333"/>
<path d="M82.2 243.5 L100.0 246.1 V261.5 L82.2 258.7 Z" fill="#e9e9e9" stroke="#b0b0b0" stroke-width="1.2" stroke-linejoin="round"/><path d="M92.0 245.1 V253.1 L100.0 254.1" fill="none" stroke="#b0b0b0" stroke-width="1.2"/>
<path d="M82.2 276.3 L100.0 278.90000000000003 V294.3 L82.2 291.5 Z" fill="#e9e9e9" stroke="#b0b0b0" stroke-width="1.2" stroke-linejoin="round"/><path d="M92.0 277.90000000000003 V285.90000000000003 L100.0 286.90000000000003" fill="none" stroke="#b0b0b0" stroke-width="1.2"/>
<path d="M82.2 308.6 L100.0 311.20000000000005 V326.6 L82.2 323.8 Z" fill="#e9e9e9" stroke="#b0b0b0" stroke-width="1.2" stroke-linejoin="round"/><path d="M92.0 310.20000000000005 V318.20000000000005 L100.0 319.20000000000005" fill="none" stroke="#b0b0b0" stroke-width="1.2"/>
<path d="M82.2 344.7 a1.2 1.2 0 0 1 1.2 -1.2 H88.7 L90.7 345.8 H99.5 a1.2 1.2 0 0 1 1.2 1.2 V356.3 a1.2 1.2 0 0 1 -1.2 1.2 H83.4 a1.2 1.2 0 0 1 -1.2 -1.2 Z" fill="none" stroke="#444" stroke-width="1.3" stroke-linejoin="round"/>
<path d="M82.2 539.6 a1.2 1.2 0 0 1 1.2 -1.2 H88.7 L90.7 540.6999999999999 H99.5 a1.2 1.2 0 0 1 1.2 1.2 V551.1999999999999 a1.2 1.2 0 0 1 -1.2 1.2 H83.4 a1.2 1.2 0 0 1 -1.2 -1.2 Z" fill="none" stroke="#444" stroke-width="1.3" stroke-linejoin="round"/>
<path d="M82.8 389.59999999999997 L85.0 384.9 L94.39999999999999 374.79999999999995 L98.0 377.79999999999995 L88.39999999999999 388.0 Z M85.0 384.9 L88.39999999999999 388.0" fill="none" stroke="#b0b0b0" stroke-width="1.2" stroke-linejoin="round"/><path d="M80.8 391.4H99.8" stroke="#6f8fd0" stroke-width="1.1"/>
<path d="M59 519.7 L61.2 515.0 L70.6 504.9 L74.2 507.9 L64.6 518.1 Z M61.2 515.0 L64.6 518.1" fill="none" stroke="#444" stroke-width="1.2" stroke-linejoin="round"/><path d="M57 521.5H76" stroke="#6f8fd0" stroke-width="1.1"/>
<path d="M82.8 584.8000000000001 L85.0 580.1 L94.39999999999999 570.0 L98.0 573.0 L88.39999999999999 583.2 Z M85.0 580.1 L88.39999999999999 583.2" fill="none" stroke="#b0b0b0" stroke-width="1.2" stroke-linejoin="round"/><path d="M80.8 586.6H99.8" stroke="#6f8fd0" stroke-width="1.1"/>
<path d="M82.8 649.9000000000001 L85.0 645.2 L94.39999999999999 635.1 L98.0 638.1 L88.39999999999999 648.3000000000001 Z M85.0 645.2 L88.39999999999999 648.3000000000001" fill="none" stroke="#7d8f9c" stroke-width="1.2" stroke-linejoin="round"/><path d="M80.8 651.7H99.8" stroke="#6f8fd0" stroke-width="1.1"/>
<g stroke="#555" stroke-width="1.100" stroke-linejoin="round"><path d="M82.500 408 a1.500 1.500 0 0 1 1.500 -1.500 H96 L99.200 409.700 V424 H85.700 L82.500 420.800 Z" fill="#fff"/><rect x="85.700" y="409.700" width="13.500" height="14.300" fill="#9a9a9a"/><path d="M85.700 409.700 h6.700 v14.300 h-6.700 Z M85.700 416.800 h13.500" fill="#c4c4c4" stroke="#8a8a8a" stroke-width=".8"/><path d="M85.700 416.800 h6.700 v7.200 h-6.700z" fill="#b0b0b0" stroke="none"/><path d="M82.500 407 L85.700 409.700" fill="none"/></g>
<g stroke="#444" stroke-width="1.200" stroke-linejoin="round"><path d="M80.800 438.500 L91 437 L100.800 442.500 V457.400 L91 455.200 L80.800 452.400 Z" fill="#fff"/><path d="M91 442.300 L100.800 442.500 V457.400 L91 455.200 Z" fill="#b8b8b8"/><path d="M80.800 438.500 L91 442.300 M94 445.500 L98.500 445.800 L94 454 Z" fill="#888"/></g><g fill="#fff" stroke="#333" stroke-width="1.100"><ellipse cx="84.300" cy="443" rx="1.300" ry="1.700"/><ellipse cx="88.300" cy="444.600" rx="1.300" ry="1.700"/><ellipse cx="84.300" cy="448.600" rx="1.300" ry="1.700"/><ellipse cx="88.300" cy="450.300" rx="1.300" ry="1.700"/></g>
<g stroke="#333" stroke-width="1.500" stroke-linejoin="round"><path d="M81 476 a4 4 0 0 1 4 -4 H96 a4 4 0 0 1 3 6.500 L89.500 488.600 a4 4 0 0 1 -4 1 L82.600 488 a2.500 2.500 0 0 1 -1.600 -2.400 Z" fill="#fff"/></g><g fill="#777" stroke="#333" stroke-width="1"><circle cx="87" cy="476.800" r="1.900"/><circle cx="95.300" cy="476.800" r="1.900"/><circle cx="87" cy="485" r="1.900"/></g><path d="M84.500 479 a3.500 3.500 0 0 0 0 5" fill="none" stroke="#333" stroke-width="1.200"/>
<path d="M229.5 403.0V426.0" stroke="#222" stroke-width="2.4" stroke-dasharray="2.2 1.8"/><circle cx="229.5" cy="414.5" r="3.9" fill="#222"/>
<path d="M229.5 435.9V458.9" stroke="#222" stroke-width="2.4" stroke-dasharray="2.2 1.8"/><circle cx="229.5" cy="447.4" r="3.9" fill="#222"/>
<path d="M229.5 468.0V491.0" stroke="#222" stroke-width="2.4" stroke-dasharray="2.2 1.8"/><circle cx="229.5" cy="479.5" r="3.9" fill="#222"/>
<path d="M229.5 761.0V784.0" stroke="#222" stroke-width="2.4" stroke-dasharray="2.2 1.8"/><circle cx="229.5" cy="772.5" r="3.9" fill="#222"/>
<path d="M229.5 793.0V816.0" stroke="#222" stroke-width="2.4" stroke-dasharray="2.2 1.8"/><circle cx="229.5" cy="804.5" r="3.9" fill="#222"/>
<path d="M229.5 825.8V848.8" stroke="#222" stroke-width="2.4" stroke-dasharray="2.2 1.8"/><circle cx="229.5" cy="837.3" r="3.9" fill="#222"/>
<g stroke="#444" stroke-width="1.2" stroke-linejoin="round" fill="#fff"><path d="M81.5 603.3 a1.5 1.5 0 0 1 1.5 -1.5 H96.0 L99.5 605.3 V619.8 H85.0 L81.5 616.3 Z"/><path d="M82.0 602.3 L85.0 605.3 H99.5 M85.0 605.3 V619.8" fill="none"/><path d="M88.0 611.3 L90.5 608.8 H99.1 V619.4 H88.0Z" fill="#bdbdbd"/><rect x="88.0" y="611.3" width="8.6" height="8.1" fill="#999"/></g>
<g stroke="#b5b5b5" stroke-width="1.2" stroke-linejoin="round" fill="#fff"><path d="M81.5 700.5 a1.5 1.5 0 0 1 1.5 -1.5 H96.0 L99.5 702.5 V717 H85.0 L81.5 713.5 Z"/><path d="M82.0 699.5 L85.0 702.5 H99.5 M85.0 702.5 V717" fill="none"/><path d="M88.0 708.5 L90.5 706 H99.1 V716.6 H88.0Z" fill="#e2e2e2"/><rect x="88.0" y="708.5" width="8.6" height="8.1" fill="#d2d2d2"/></g>
<g stroke="#b5b5b5" stroke-width="1.200" fill="#fff" stroke-linejoin="round"><path d="M81.500 738 a6.500 6.500 0 0 1 6.500 -6.500 H97 L99.800 734.300 V749.800 H84.300 L81.500 747 Z"/><path d="M84.300 740.500 a6.200 6.200 0 0 1 6.200 -6.200 H99.800 M84.300 740.500 V749.800" fill="none"/><path d="M81.600 737 a6 6 0 0 1 6 -5.400 l2.600 2.700 a6.200 6.200 0 0 0 -5.900 6.200 Z" fill="#ddd"/></g>
<g fill="none" stroke="#b5b5b5" stroke-width="1.300" stroke-linecap="round"><path d="M80.500 775.500 L84.600 764.800 a6 4 15 0 1 11.200 1.500 a6 3.200 15 0 1 3.600 5 L95.600 781.600"/><ellipse cx="90.500" cy="768" rx="3.200" ry="1.800" transform="rotate(15 90.500 768)"/><path d="M86.800 776 L91.500 780.500 M90 782 l1.500 -1.500"/></g>
<g fill="none" stroke="#b5b5b5" stroke-width="1.300" stroke-linecap="round"><path d="M56.800 840 L60.600 830.500 a7 4.200 15 0 1 14 3.500 L72 844 M61 846.500 L64.300 838.400 M65.500 847.500 L68.500 840 M70 848 L72.400 842"/><ellipse cx="67.500" cy="832.600" rx="4.600" ry="2.500" transform="rotate(15 67.500 832.600)"/><ellipse cx="67.500" cy="832.600" rx="2" ry="1" transform="rotate(15 67.500 832.600)"/></g>
<rect x="56.400" y="796.400" width="19.800" height="18.200" rx="2" fill="#fff" stroke="#c8c8c8" stroke-width="1.100"/>
<g fill="none" stroke="#444" stroke-width="1.25" stroke-linejoin="round"><path d="M81.1 897.6 L90.0 897.6 L90.0 889.5 L95.7 889.5 L99.6 893.0 L99.6 907.6 L85.4 907.6 L81.1 903.8 Z" fill="#fff"/><path d="M81.1 897.6 L85.4 901.6 L85.4 907.6 M85.4 901.6 L94.3 901.6 L94.3 893.2 L99.6 893.0 M90.0 889.5 L94.3 893.2 M90.0 897.6 L94.3 901.6"/></g>
<g fill="none" stroke="#444" stroke-width="1.25" stroke-linejoin="round"><path d="M81.1 930.1 L90.0 930.1 L90.0 922.0 L95.7 922.0 L99.6 925.5 L99.6 940.1 L85.4 940.1 L81.1 936.3 Z" fill="#fff"/><path d="M81.1 930.1 L85.4 934.1 L85.4 940.1 M85.4 934.1 L94.3 934.1 L94.3 925.7 L99.6 925.5 M90.0 922.0 L94.3 925.7 M90.0 930.1 L94.3 934.1"/></g>
<g fill="none" stroke="#444" stroke-width="1.25" stroke-linejoin="round"><path d="M81.1 962.6 L90.0 962.6 L90.0 954.5 L95.7 954.5 L99.6 958.0 L99.6 972.6 L85.4 972.6 L81.1 968.8 Z" fill="#fff"/><path d="M81.1 962.6 L85.4 966.6 L85.4 972.6 M85.4 966.6 L94.3 966.6 L94.3 958.2 L99.6 958.0 M90.0 954.5 L94.3 958.2 M90.0 962.6 L94.3 966.6"/></g>
<g fill="none" stroke="#444" stroke-width="1.25" stroke-linejoin="round"><path d="M81.1 995.1 L90.0 995.1 L90.0 987.0 L95.7 987.0 L99.6 990.5 L99.6 1005.1 L85.4 1005.1 L81.1 1001.3 Z" fill="#fff"/><path d="M81.1 995.1 L85.4 999.1 L85.4 1005.1 M85.4 999.1 L94.3 999.1 L94.3 990.7 L99.6 990.5 M90.0 987.0 L94.3 990.7 M90.0 995.1 L94.3 999.1"/></g>
<g fill="none" stroke="#444" stroke-width="1.25" stroke-linejoin="round"><path d="M81.1 1027.6 L90.0 1027.6 L90.0 1019.5 L95.7 1019.5 L99.6 1023.0 L99.6 1037.6 L85.4 1037.6 L81.1 1033.8 Z" fill="#fff"/><path d="M81.1 1027.6 L85.4 1031.6 L85.4 1037.6 M85.4 1031.6 L94.3 1031.6 L94.3 1023.2 L99.6 1023.0 M90.0 1019.5 L94.3 1023.2 M90.0 1027.6 L94.3 1031.6"/></g>
<path d="M323.500 661 h14 M323.500 666.300 h14 M323.500 671.600 h14 M323.500 676.900 h14" stroke="#333" stroke-width="1.200"/><path d="M318.600 661 V677.500" stroke="#333" stroke-width="1.500"/><path d="M315.300 657.400 l3.300 3.300 l3.300 -3.300" fill="none" stroke="#333" stroke-width="1.500"/>
<path d="M547.200 116.800 l7 7 l10.800 -11.800" fill="none" stroke="#fff" stroke-width="3.300"/>
<path d="M585 112.400 l12.400 12.400 M597.400 112.400 l-12.400 12.400" stroke="#c8283a" stroke-width="3.400"/>
<path d="M548.600 177.200 l7.400 7.600 M556 177.200 l-7.400 7.600" stroke="#c0c0c0" stroke-width="1.100"/>
<path d="M589.500 157.800 V149.800 A8 8 0 0 1 597.500 157.800 Z" fill="#e6e6e6"/><circle cx="589.500" cy="157.800" r="10.500" fill="none" stroke="#222" stroke-width="1.200"/><circle cx="589.500" cy="157.800" r="8" fill="none" stroke="#222" stroke-width="1.600"/><path d="M589.500 150 V157.800 H597.200" fill="none" stroke="#222" stroke-width="1.600"/>
<path d="M342.300 220.5 l2.800 2.900 l5 -5.900" fill="none" stroke="#fff" stroke-width="2.200"/>
<path d="M342.300 322.5 l2.800 2.900 l5 -5.900" fill="none" stroke="#fff" stroke-width="2.200"/>
<circle cx="594.300" cy="355.500" r="7.700" fill="#b9b9b9"/><text x="591" y="360.4" font-size="13" fill="#fff" textLength="6.6" lengthAdjust="spacingAndGlyphs" font-weight="bold" >?</text>
<path d="M92.500 1257 H136 L145.600 1274 L136 1291 H92.500 Z" fill="#e9e9e9"/><path d="M136 1257 H283 L292 1274 L283 1291 H136 L145.600 1274 Z" fill="#fff"/><path d="M283 1257 H291.500 V1291 H283 L292 1274 Z" fill="#cdcdcd"/>
<path d="M61 1275.200 h19 M70.500 1266 v18.500" stroke="#555" stroke-width="3.800"/>
<path d="M103.600 1274 L115.500 1261.500 L119.400 1265.600 V1262.800 H123 V1269.400 L127.200 1274 H124.500 V1283.600 H118.200 V1276 H112.800 V1283.600 H106.400 V1274 Z" fill="#666"/>
<path d="M158.3 1265.2 a1.2 1.2 0 0 1 1.2 -1.2 H164.8 L166.8 1266.3 H178.60000000000002 a1.2 1.2 0 0 1 1.2 1.2 V1279.3 a1.2 1.2 0 0 1 -1.2 1.2 H159.5 a1.2 1.2 0 0 1 -1.2 -1.2 Z" fill="none" stroke="#333" stroke-width="1.5" stroke-linejoin="round"/>
<circle cx="319.500" cy="1272.500" r="8.500" fill="#6c9bd1"/><circle cx="319.500" cy="1272.500" r="3" fill="#eef3fa"/><circle cx="319.500" cy="1266.300" r="1.200" fill="#eef3fa"/><circle cx="319.500" cy="1278.700" r="1.200" fill="#eef3fa"/>
<g stroke="#333" stroke-width="1.300" stroke-linejoin="round"><path d="M333.500 1263.500 H350 L355.400 1268.500 V1284.200 H339 L333.500 1279 Z" fill="#fff"/><path d="M333.500 1263.500 L339 1268.500 H355.400 M339 1268.500 V1284.200" fill="none"/><path d="M335 1264 H347.600 V1277 H339.600 L335 1272.600 Z" fill="#8e8e8e"/><path d="M339.600 1268.300 H347.600 V1277 H339.600 Z" fill="#9c9c9c"/></g>
<g fill="#fff" stroke="#333" stroke-width="1.300" stroke-linejoin="round"><path d="M572 1265 L575.600 1262.500 H580.600 L583.600 1265 V1283.800 H572 Z"/><path d="M572 1265 H583.600" fill="none"/><path d="M563 1271.500 L566.500 1268.600 H571 L573.800 1271.500 V1283.800 H566.200 L563 1281 Z"/><path d="M563 1271.500 L566.200 1273.800 H573.800 M566.200 1273.800 V1283.800" fill="none"/></g>
<g fill="#fff" stroke="#333" stroke-width="1.300" stroke-linejoin="round"><path d="M2437.400 1240.600 H2443.600 V1237 H2457.600 V1242.400 C2457.600 1245 2455 1246.800 2451 1246.800 H2437.400 Z"/><ellipse cx="2450.600" cy="1237" rx="7" ry="4.700"/><ellipse cx="2450.400" cy="1236.800" rx="3" ry="1.600"/><path d="M2443.600 1240.600 C2446 1242 2452 1242.300 2457.400 1239.500" fill="none"/></g><path d="M2439 1244 h13" stroke="#666" stroke-width="2.800" stroke-dasharray=".9 1.200"/>
<g fill="none" stroke="#333" stroke-width="1.400"><path d="M2479.500 1247.200 a12 14.800 0 0 1 24 0 Z"/><path d="M2484.700 1243.600 a6.800 8 0 0 1 13.600 0 h-4 a2.800 2.800 0 0 0 -5.600 0 Z"/></g><path d="M2481.500 1245 a10 12.500 0 0 1 20 0" fill="none" stroke="#555" stroke-width="2" stroke-dasharray="1 1.500"/>
<path d="M2528 1231 H2543.500 M2535.700 1231 V1246 M2527 1247 H2544.500" stroke="#333" stroke-width="1.800"/><path d="M2530.500 1231.500 L2527.300 1241.500 H2533.700 Z M2541 1231.500 L2537.800 1241.500 H2544.200 Z" fill="none" stroke="#333" stroke-width="1.100"/><path d="M2527 1241.500 h7 a3.500 2 0 0 1 -7 0z M2537.500 1241.500 h7 a3.500 2 0 0 1 -7 0z" fill="#333"/>
<rect x="2411.600" y="172.400" width="72.600" height="72.600" fill="#e6e9ec"/><circle cx="2411.600" cy="172.400" r="13.500" fill="#fff"/><circle cx="2484.200" cy="172.400" r="13.500" fill="#fff"/><circle cx="2411.600" cy="245" r="13.500" fill="#fff"/><circle cx="2484.200" cy="245" r="13.500" fill="#fff"/><rect x="2419" y="180.500" width="56.300" height="55.500" rx="11" fill="#fff"/>
<path d="M2447.500 116 l8 9.500 h-16 Z M2447.500 296.500 l8 -9.500 h-16 Z M2354.500 208.500 l10 -8.500 v17 Z M2541 208.500 l-10 -8.500 v17 Z" fill="#e6e9ec"/>
<path d="M2383 155.500 Q2398 134 2420.500 126 L2423 133 Q2403 141 2391 158 Z M2380.500 143.500 l-.5 13.500 l13.500 -1 Z" fill="#e6e9ec"/><path d="M2512 155.500 Q2497 134 2474.500 126 L2472 133 Q2492 141 2504 158 Z M2514.500 143.500 l.5 13.500 l-13.500 -1 Z" fill="#e6e9ec"/>
<path d="M2485.400 172.700 V246.800" stroke="#3a36c8" stroke-width="1.700"/><path d="M2412 246.100 H2486.200" stroke="#3cb043" stroke-width="1.700"/>
<g stroke="#333" stroke-width="1.300" stroke-linejoin="round"><path d="M2492.500 284 L2503.500 280.500 L2515 284 L2503.800 288 Z" fill="#fff"/><path d="M2492.500 284 L2503.800 288 V302 L2492.500 297 Z" fill="#b4b4b4"/><path d="M2515 284 L2503.800 288 V302 L2515 297 Z" fill="#e0e0e0"/></g><path d="M2525 289 h9.400 l-4.700 4.700 Z" fill="#222"/>
<g stroke="#555" stroke-width="1" stroke-linejoin="round"><path d="M2533.500 562 L2541.500 545.500 L2548.500 549 L2545 562 Z" fill="#8a8a8a"/><path d="M2541 562 L2546 548.500 L2551.500 552 L2551.800 562 Z" fill="#c8c8c8"/><rect x="2529" y="561.800" width="23.500" height="6.800" rx="1.500" fill="#fff"/><path d="M2539 561.800 v6.800 M2546 561.800 v6.800" /><circle cx="2533" cy="565.200" r="1.300" fill="#fff"/></g>
<g fill="none" stroke="#333" stroke-width="1.300" stroke-linejoin="round"><path d="M2533.500 596 L2543.500 591.500 L2551.500 595.500 V605 L2541.500 609.500 L2533.500 605.500 Z"/><path d="M2533.500 596 L2541.500 600 L2551.500 595.500 M2541.500 600 V609.500"/></g><rect x="2528" y="586" width="11.500" height="9.500" fill="#2f6fd8"/><path d="M2528 589.200 h11.500 M2528 592.400 h11.500 M2531.800 586 v9.500 M2535.700 586 v9.500" stroke="#cfe0fa" stroke-width=".9"/>
<g fill="none" stroke="#333" stroke-width="1.200" stroke-linejoin="round"><path d="M2534.500 638.500 L2541.800 635.300 L2548 638.500 V644.500 L2540.700 647.700 L2534.500 644.500 Z"/><path d="M2534.500 638.500 L2540.700 641.500 L2548 638.500 M2540.700 641.500 V647.700"/><path d="M2533 636.500 c-2 0 -2 1.500 -2 3 c0 1.500 -.5 2.300 -1.500 2.600 c1 .3 1.500 1.100 1.500 2.600 c0 1.500 0 3 2 3 M2549.500 632 c2 0 2 1.500 2 3.500 v3.500 c0 1.500 .5 2.300 1.500 2.600 c-1 .3 -1.500 1.100 -1.500 2.600 v2.500 c0 1.500 0 3 -2 3"/></g><rect x="2528" y="627.500" width="11.500" height="9.500" fill="#444"/><path d="M2528 630.700 h11.500 M2528 633.900 h11.500 M2531.800 627.500 v9.500 M2535.700 627.500 v9.500" stroke="#ddd" stroke-width=".9"/>
<rect x="2528" y="669" width="11.500" height="9.500" fill="#444"/><path d="M2528 672.200 h11.500 M2528 675.400 h11.500 M2531.800 669 v9.500 M2535.700 669 v9.500" stroke="#ddd" stroke-width=".9"/><path d="M2531 677 c-3.500 3 -3.500 9 0 12.500 M2550.500 672 c3.500 4 3.500 12.500 0 17.500" fill="none" stroke="#222" stroke-width="1.800"/><text x="2533.5" y="688.5" font-size="19" fill="#222" textLength="12" lengthAdjust="spacingAndGlyphs" font-weight="bold" font-style="italic" font-family="Liberation Serif, serif">x</text>
<rect x="2526.200" y="720" width="29.500" height="29.500" rx="3.500" fill="#d5d5d5"/><path d="M2541 734.800 L2532.300 726 A12.300 12.300 0 0 1 2549.700 726 Z" fill="#6cbf4c"/><path d="M2541 734.800 L2549.700 726 A12.300 12.300 0 0 1 2549.700 743.500 Z" fill="#45b3ea"/><path d="M2541 734.800 L2549.700 743.500 A12.300 12.300 0 0 1 2532.300 743.500 Z" fill="#f2b33d"/><path d="M2541 734.800 L2532.300 743.500 A12.300 12.300 0 0 1 2532.300 726 Z" fill="#d94a38"/><path d="M2532.300 726 L2549.700 743.500 M2549.700 726 L2532.300 743.500" stroke="#d5d5d5" stroke-width="1.600"/>
<rect x="2526.200" y="761" width="29.500" height="29.500" rx="3.500" fill="#d5d5d5"/><rect x="2529" y="764" width="24" height="24" fill="#1450c8" stroke="#111" stroke-width="1.600"/><text x="2529.75" y="783.3" font-size="17.5" fill="#fff" textLength="22.6" lengthAdjust="spacingAndGlyphs" font-weight="bold" font-family="Liberation Serif, serif">MK</text>
<text x="48.03" y="31.5" font-size="19.5" fill="#6c6c6c" textLength="84.84" lengthAdjust="spacingAndGlyphs" >onshape</text>
<text x="195.36" y="35.5" font-size="27.3" fill="#2b2b2b" textLength="408.28" lengthAdjust="spacingAndGlyphs" font-weight="bold" >1C - Practice Exercise Solutions</text>
<text x="612.86" y="35.5" font-size="19" fill="#8a8a8a" textLength="43.28" lengthAdjust="spacingAndGlyphs" >Main</text>
<text x="729.83" y="34.5" font-size="19.5" fill="#8a8a8a" textLength="67.34" lengthAdjust="spacingAndGlyphs" >Stage 1</text>
<text x="2266.45" y="32.5" font-size="17.5" fill="#fff" textLength="46.6" lengthAdjust="spacingAndGlyphs" font-weight="bold" >Share</text>
<text x="2437.78" y="33" font-size="17" fill="#444" textLength="95.04" lengthAdjust="spacingAndGlyphs" >Jonathan Mi</text>
<text x="2106.2" y="23.2" font-size="14" fill="#fff" textLength="7.8" lengthAdjust="spacingAndGlyphs" font-weight="bold" >4</text>
<text x="1814.81" y="80" font-size="16.5" fill="#444" textLength="108.48" lengthAdjust="spacingAndGlyphs" >Search tools...</text>
<text x="1931.66" y="80" font-size="14" fill="#555" textLength="33.68" lengthAdjust="spacingAndGlyphs" >alt/⌥</text>
<text x="1975.5" y="80" font-size="14" fill="#555" textLength="8" lengthAdjust="spacingAndGlyphs" >c</text>
<text x="54.54" y="121.8" font-size="16" fill="#222" textLength="100.92" lengthAdjust="spacingAndGlyphs" stroke="#222" stroke-width="0.55">Features (22)</text>
<text x="106.48" y="159.8" font-size="17" fill="#8c8c8c" textLength="155.54" lengthAdjust="spacingAndGlyphs" font-style="italic" >Filter by name or type</text>
<text x="78.54" y="193.5" font-size="16" fill="#383838" textLength="128.42" lengthAdjust="spacingAndGlyphs" >Default geometry</text>
<text x="105.84" y="226.5" font-size="16" fill="#383838" textLength="44.62" lengthAdjust="spacingAndGlyphs" >Origin</text>
<text x="105.84" y="258.5" font-size="16" fill="#ababab" textLength="28.92" lengthAdjust="spacingAndGlyphs" >Top</text>
<text x="105.84" y="291.5" font-size="16" fill="#ababab" textLength="40.12" lengthAdjust="spacingAndGlyphs" >Front</text>
<text x="105.84" y="323.5" font-size="16" fill="#ababab" textLength="39.42" lengthAdjust="spacingAndGlyphs" >Right</text>
<text x="107.04" y="356.5" font-size="16" fill="#383838" textLength="72.12" lengthAdjust="spacingAndGlyphs" >Frame (4)</text>
<text x="105.84" y="388.5" font-size="16" fill="#ababab" textLength="92.12" lengthAdjust="spacingAndGlyphs" >Tube Sketch</text>
<text x="105.84" y="421.5" font-size="16" fill="#383838" textLength="100.62" lengthAdjust="spacingAndGlyphs" >Extrude Indi...</text>
<text x="105.84" y="453.8" font-size="16" fill="#383838" textLength="105.12" lengthAdjust="spacingAndGlyphs" >Tube Conver...</text>
<text x="105.84" y="486.5" font-size="16" fill="#383838" textLength="63.92" lengthAdjust="spacingAndGlyphs" >Gusset 1</text>
<text x="82.04" y="518.5" font-size="16" fill="#383838" textLength="115.62" lengthAdjust="spacingAndGlyphs" >Gearbox Layout</text>
<text x="107.04" y="551.5" font-size="16" fill="#383838" textLength="95.92" lengthAdjust="spacingAndGlyphs" >GB Plates (6)</text>
<text x="105.84" y="583.8" font-size="16" fill="#ababab" textLength="93.42" lengthAdjust="spacingAndGlyphs" >Plate Sketch</text>
<text x="105.84" y="616.5" font-size="16" fill="#383838" textLength="100.12" lengthAdjust="spacingAndGlyphs" >Plate Extrude</text>
<text x="105.84" y="648.8" font-size="16" fill="#5d8db0" textLength="84.62" lengthAdjust="spacingAndGlyphs" font-weight="bold" >Inner plate</text>
<text x="107.04" y="713.8" font-size="16" fill="#ababab" textLength="71.42" lengthAdjust="spacingAndGlyphs" font-style="italic" >Extrude 2</text>
<text x="107.04" y="746.8" font-size="16" fill="#ababab" textLength="50.62" lengthAdjust="spacingAndGlyphs" font-style="italic" >Fillet 1</text>
<text x="108.8" y="779.5" font-size="16" fill="#ababab" textLength="7.5" lengthAdjust="spacingAndGlyphs" font-style="italic" >?</text>
<text x="84.04" y="811.8" font-size="16" fill="#ababab" textLength="116.12" lengthAdjust="spacingAndGlyphs" font-style="italic" >? teeth (5 mm ...</text>
<text x="85.5" y="843.8" font-size="16" fill="#ababab" textLength="7" lengthAdjust="spacingAndGlyphs" font-style="italic" >?</text>
<text x="78.54" y="872.5" font-size="16" fill="#383838" textLength="62.92" lengthAdjust="spacingAndGlyphs" >Parts (5)</text>
<text x="105.84" y="905" font-size="16" fill="#383838" textLength="103.12" lengthAdjust="spacingAndGlyphs" >Tube 1"x1"x7"</text>
<text x="105.84" y="937.5" font-size="16" fill="#383838" textLength="103.12" lengthAdjust="spacingAndGlyphs" >Tube 1"x1"x7"</text>
<text x="105.84" y="970" font-size="16" fill="#383838" textLength="103.12" lengthAdjust="spacingAndGlyphs" >Tube 1"x1"x8"</text>
<text x="105.84" y="1002.5" font-size="16" fill="#383838" textLength="103.92" lengthAdjust="spacingAndGlyphs" >Frame Gusset</text>
<text x="105.84" y="1035" font-size="16" fill="#383838" textLength="86.62" lengthAdjust="spacingAndGlyphs" >Motor Plate</text>
<text x="58.75" y="810.5" font-size="12.5" fill="#aaa" textLength="15.5" lengthAdjust="spacingAndGlyphs" >CB</text>
<text x="340.88" y="123.5" font-size="15.3" fill="#222" textLength="79.54" lengthAdjust="spacingAndGlyphs" stroke="#222" stroke-width="0.6">Inner plate</text>
<text x="344.72" y="162.2" font-size="13" fill="#555" textLength="73.56" lengthAdjust="spacingAndGlyphs" >Sketch plane</text>
<text x="345.24" y="185.2" font-size="16" fill="#555" textLength="200.72" lengthAdjust="spacingAndGlyphs" >Face of Extrude Individual...</text>
<text x="358.21" y="226" font-size="16.5" fill="#555" textLength="133.98" lengthAdjust="spacingAndGlyphs" >Disable imprinting</text>
<text x="358.21" y="260" font-size="16.5" fill="#555" textLength="127.68" lengthAdjust="spacingAndGlyphs" >Show constraints</text>
<text x="358.21" y="294" font-size="16.5" fill="#555" textLength="132.68" lengthAdjust="spacingAndGlyphs" >Show expressions</text>
<text x="358.21" y="328" font-size="16.5" fill="#555" textLength="130.98" lengthAdjust="spacingAndGlyphs" >Show overdefined</text>
<text x="187.54" y="1278.8" font-size="16" fill="#666" textLength="80.42" lengthAdjust="spacingAndGlyphs" >Exercise 3</text>
<text x="360.54" y="1280.6" font-size="16" fill="#666" textLength="160.92" lengthAdjust="spacingAndGlyphs" >Exercise 3 Assembly</text>
<text x="588.44" y="1280.6" font-size="16" fill="#333" textLength="169.92" lengthAdjust="spacingAndGlyphs" >Exercise 3 Part Studio</text>
<text x="2433.74" y="214.4" font-size="16" fill="#444" textLength="26.92" lengthAdjust="spacingAndGlyphs" >Left</text>
<text x="2481.3" y="166.3" font-size="15.5" fill="#3a36c8" textLength="8" lengthAdjust="spacingAndGlyphs" >Z</text>
<text x="2393.8" y="252.6" font-size="15.5" fill="#2fa82f" textLength="8.6" lengthAdjust="spacingAndGlyphs" >Y</text>
</svg>
</body></html>
